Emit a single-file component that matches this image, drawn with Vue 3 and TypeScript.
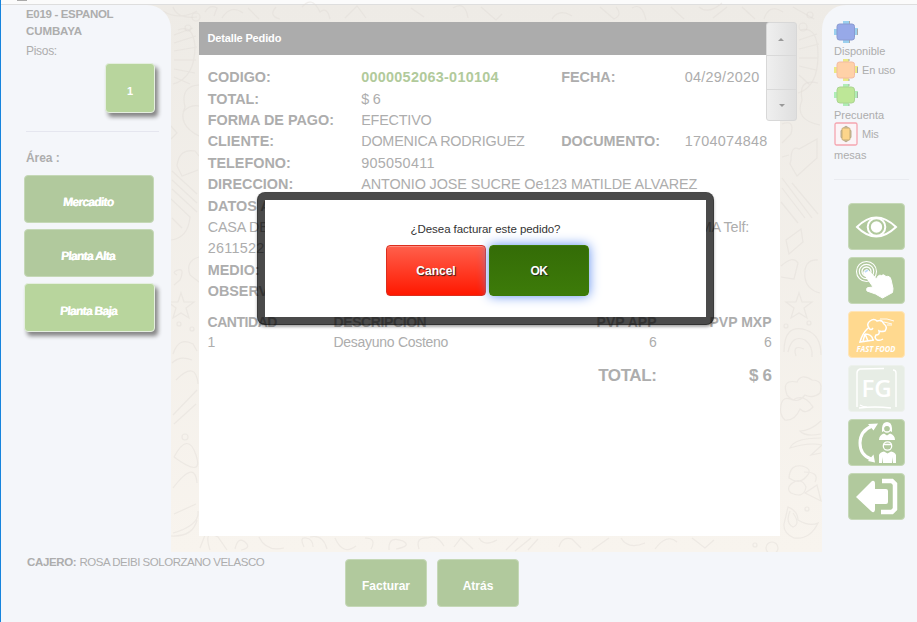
<script setup lang="ts">
interface Field {
  label: string
  value?: string
  label2?: string
  value2?: string
  kind?: string
}

const fields: Field[] = [
  { label: 'CODIGO:', value: '0000052063-010104', label2: 'FECHA:', value2: '04/29/2020', kind: 'code' },
  { label: 'TOTAL:', value: '$ 6' },
  { label: 'FORMA DE PAGO:', value: 'EFECTIVO' },
  { label: 'CLIENTE:', value: 'DOMENICA RODRIGUEZ', label2: 'DOCUMENTO:', value2: '1704074848', kind: 'client' },
  { label: 'TELEFONO:', value: '905050411', kind: 'phone' },
  { label: 'DIRECCION:', value: 'ANTONIO JOSE SUCRE Oe123 MATILDE ALVAREZ', kind: 'address' },
]

const areas = [
  { name: 'Mercadito', active: false },
  { name: 'Planta Alta', active: false },
  { name: 'Planta Baja', active: true },
]
</script>

<template>
  <div class="screen">
    <div class="topbar"><span class="tab-mark"></span></div>
    <div class="main">
      <svg class="doodles" viewBox="0 0 917 552" fill="none" stroke="#dedad5" stroke-width="1.2">
        <g stroke-opacity=".4">
          <path d="M173 7q4 12 24 10M163 11q16 10 34 0M178 30q15-6 17 16 0 32-22 38M174 35l19-7M174 43l22-7M174 51l23-4M174 60h22M174 69l21 4M174 77l16 7" />
          <circle cx="188" cy="28" r="3" /><circle cx="196" cy="17" r="4" />
          <path d="M199 85q-19 1-14 22-8 18 14 29M183 112q7-8 16-6M171 126l6 7-6 6M177 166q2-18 18-15l4 5M177 166l5 10 16-6" />
          <path d="M172 171l25 23M172 180l25 23M172 189l25 23M171 199l19 18q-2 21-19 23M172 218l10 10M177 275q-6-3 1-5t2 10l-6 5M199 257q-14 4-9 18l9 7" />
          <path d="m181 293 3 9h10l-8 6 3 10-8-5-8 5 3-10-8-6h10zM173 354q6-18 20-10l4 7M172 363q8-8 20-3M176 380q20-20 22 4M173 415l24-25M174 424l22-20M174 457q14-26 22-2t-22 2M173 488q22-29 24-5M174 514l22-10M173 533q27-8 25-22" />
          <circle cx="179" cy="324" r="2" /><circle cx="192" cy="329" r="2" /><circle cx="185" cy="437" r="3" />
          <path d="M205 12q5-8 12-4l-3 8M222 18q9-14 21-5M248 8l11 11M276 7q-8 9 4 12M302 7q10-12 18 5 7-6 10 7M345 18l12-12 9 12M411 8l13 9M453 8q12-8 15 10M481 7l15 13 6-6M552 19q7-11 20-3M600 7l14 12q9-4 2-12M632 8q10-6 14 12M671 7l13 12M699 7q9 8 23-4M713 18l14-11" />
          <path d="M742 7l13 12M764 19q5-16 19-7M793 7l21 12M800 30q18-5 18 25 0 32-20 38M799 40l18-6M799 49l20-5M799 58h19M799 66l17 4M799 75l11 10" />
          <circle cx="803" cy="27" r="4" /><circle cx="810" cy="15" r="3" />
          <path d="M818 83q-20-5-16 17-8 20 18 25M782 124q13-5 9 10l-9 9M782 157l7-2M791 160q0-15 8-11l18-10v19l-20 18-7-12z" />
          <path d="M782 178l30 40M782 188l23 30M781 202l17 21M792 183l26 31M786 240l15-11 2 13-14 12zM781 266q12-11 17-3l-4 16-13-2M818 260q-15-1-13 18 2 12 15 15" />
          <path d="m799 293 3 9h10l-8 6 3 10-8-5-8 5 3-10-8-6h10zM784 352q0-29 22-22 15 5 15 25M788 352q4-18 17-12 8 6 7 17M796 356q-4-12 8-7" />
          <circle cx="786" cy="326" r="2" /><circle cx="809" cy="323" r="2" />
          <path d="M787 395q-6-16 10-13 4-9 15-2 12 0 8 13-7 6-15 2-9 11-18 0zM781 405q2-10 12-5 11-7 20 7-7 8-13 2-5 12-15 11-6-5-4-15z" />
          <path d="M821 421q-11 10-21 10 5 6 21 3M821 438q-27 0-31 10 19-6 32-3l-11 10 10-2" />
          <path d="M789 478q1-14 13-12 12 3 4 11-7 8-17 1zM791 484q10-8 15 3-2 12-15 6-5-4 0-9zM804 472q16 0 11 10M805 493l12-8 4 16z" />
          <path d="M788 507q10 4 10 13 12 7 20 3-8 17-24 15-11-5-10-14zM790 511q-5 12 3 16 8-3 0-14" />
          <circle cx="807" cy="509" r="2" />
          <path d="M171 536q22 1 26-16M200 548l5-13M210 550q-7-22 8-13l9 13M235 549q3-13 10-7t-4 8M259 537q7 15 25 11M304 547q-5-10 2-9t7 9M310 537q13-3 17 12M335 538q8 18 21 8M365 538q12 0 6 11M389 550q-1-15 14-9 9 5-7 8M419 549q-4-12 9-11 9-4 16 8M454 547l7-9 12 11M479 538q5 9 18 2M506 550l12-12M515 551l16-13M528 550l10-11M559 547q3-11 13-8l9 9M592 550l17-12M621 538q7 12 24 5M655 549q12-16 22-7M692 538l13 10 9-8" />
          <circle cx="755" cy="545" r="2" /><circle cx="772" cy="548" r="6" />
        </g>
      </svg>

      <aside class="left">
        <div class="store"><span>E019 - ESPANOL</span><br>CUMBAYA</div>
        <div class="floor-label">Pisos:</div>
        <button class="floor">1</button>
        <div class="area-head">Área :</div>
        <div class="areas">
          <button v-for="a in areas" :key="a.name" class="area" :class="{ active: a.active }">
            <span>{{ a.name }}</span>
          </button>
        </div>
      </aside>

      <section class="detail">
        <header><span>Detalle Pedido</span></header>
        <div class="fields">
          <div v-for="f in fields" :key="f.label" class="field" :class="f.kind">
            <b>{{ f.label }}</b><span class="value">{{ f.value }}</span>
            <b class="label2">{{ f.label2 }}</b><span class="value2">{{ f.value2 }}</span>
          </div>
          <b class="line">DATOS ADICIONALES:</b>
          <div class="line split"><span>CASA DE DOS PISOS</span><span class="telf">MA Telf:</span></div>
          <div class="line phone2">2611522</div>
          <b class="line">MEDIO:</b>
          <b class="line">OBSERVACIONES:</b>
        </div>
        <div class="items">
          <b>CANTIDAD</b><b>DESCRIPCION</b><b class="num">PVP APP</b><b class="num">PVP MXP</b>
          <span>1</span><span class="desc">Desayuno Costeno</span><span class="num">6</span><span class="num">6</span>
        </div>
        <div class="total"><b>TOTAL:</b><b>$ 6</b></div>
        <div class="scroller">
          <div><i class="up"></i></div>
          <div></div>
          <div><i class="down"></i></div>
        </div>
      </section>

      <aside class="right">
        <div class="legend">
          <div class="row"><svg width="24" height="22" viewBox="0 0 24 22"><path d="M9 0h6v4H9zM9 18h6v4H9zM0 8h3v6H0zM21 7h3v7h-3z" fill="#9bd0ee" /><path d="M15.500 0v3M15.500 19v3M23.5 8v6" stroke="#aaa" /><rect x="3" y="3" width="17.500" height="16" rx="2.5" fill="#97a9e8" stroke="#8a9ad0" /></svg></div>
          <div class="caption disp">Disponible</div>
          <div class="row use"><svg width="24" height="22" viewBox="0 0 24 22"><path d="M9 0h6v4H9zM9 18h6v4H9zM0 8h3v6H0zM21 7h3v7h-3z" fill="#ece985" /><path d="M15 0v2M15 20v2M23.5 8v6" stroke="#aaa" /><rect x="3" y="3" width="17.500" height="16" rx="2.5" fill="#ffd1a7" stroke="#f3bba3" /></svg><span>En uso</span></div>
          <div class="row pre"><svg width="24" height="22" viewBox="0 0 24 22"><path d="M9 0h6v4H9zM9 18h6v4H9zM0 8h3v6H0zM21 7h3v7h-3z" fill="#b0edb7" /><path d="M15 0v2M15 20v2M23.5 8v6" stroke="#a5b5a5" /><rect x="3" y="3" width="17.500" height="16" rx="3" fill="#bde797" stroke="#abd491" /></svg></div>
          <div class="caption precuenta">Precuenta</div>
          <div class="row mine"><svg width="24" height="24" viewBox="0 0 24 24"><rect x="1" y="1" width="22" height="22" rx="1.5" fill="#fbf4f7" stroke="#f5a5b0" stroke-width="1.3" /><path d="M9.500 6Q12 2.500 14.500 6V18Q12 21.500 9.500 18ZM7 8.500h10v7H7z" fill="#c8bea5" stroke="#b9ad92" /><rect x="8" y="6" width="8" height="12" rx="1" fill="#fcd58b" stroke="#c5ad79" /></svg><span>Mis</span></div>
          <div class="caption mesas">mesas</div>
        </div>
        <nav class="tools">
          <button><svg viewBox="0 0 57 47" fill="none" stroke="#fff" stroke-width="2"><path d="M9 24Q28 5 48 24Q28 43 9 24Z" /><circle cx="28.5" cy="24" r="8.8" /><circle cx="28.5" cy="24" r="5.7" fill="#fff" stroke="none" /></svg></button>
          <button><svg viewBox="0 0 57 47" fill="none" stroke="#fff"><circle cx="18.5" cy="14.5" r="10" stroke-width="1.1" /><circle cx="18.5" cy="14.5" r="7.200" stroke-width="1.2" /><circle cx="18.5" cy="14.5" r="4.500" stroke-width="1.4" /><path d="M16 14.500q2.500-4 5.500 0l7 7.500q1.500-5 5-3.500 2-2 4.500 1 4-1 5 3l2 9-.5 4-10 5.500-7-4-8.500-3q-1.500-3.500 2-3.500l4-.5-9-13q-.8-1.500 0-2.500z" fill="#fff" /><path d="m17 15 3-2" stroke="#bddcf8" stroke-width="1.600" /></svg></button>
          <button class="food"><svg viewBox="0 0 57 47" fill="none" stroke="#fff" stroke-width="1.500"><path d="M21 17q-3-4 1-7 4-3 7 0 5-2 7 3 4 3 1 7-4 1-6 0 1 4-3 4-2 3 1 5 3 1 6-1M20 17q-6 6-8 14l14-2M17 23q7 0 8 6M15 30l2-7M20 30l-3-7M21 17q2 3 4 0" /><path d="M32 8q7-1 14 2M36 11l8 2M39 14h5" stroke-width=".9" /><text x="8.500" y="40.500" fill="#fff" stroke="none" textLength="39" lengthAdjust="spacingAndGlyphs">FAST FOOD</text></svg></button>
          <button class="fg"><svg viewBox="0 0 57 47" fill="none" stroke="#fff" stroke-width="1.4"><path d="M9 42V8q0-3 3-4l24-.5M45 5q3 0 3 3v34M11 43q16-2 32 0M12 40q3 2 7 2" /><text x="28.500" y="32" text-anchor="middle" fill="#fff" stroke="none">FG</text></svg></button>
          <button><svg viewBox="0 0 57 47" fill="none" stroke="#fff" stroke-width="3"><path d="M24 7Q12 12 12 24T23 40" /><path d="m20 5 10-.5-4.500 7zM20 42l5.500-6.500 1.500 8z" fill="#fff" stroke="none" /><circle cx="39" cy="9.500" r="3.500" stroke-width="1.300" /><path d="M34 13V9q.5-6 5-6t5 6v4l-2-1q1-5-3-5t-3 5zM31 21q0-5 5-6.500l3 2 3-2q5 1.500 5 6.500z" fill="#fff" stroke="none" /><circle cx="39.500" cy="27" r="4.200" stroke-width="1.300" /><path d="M35.500 25.500h8" stroke-width="1.300" /><path d="M31 44v-8q1-3 5-3.500l3.500 2 3.500-2q4 .5 5 3.500v8h-3v-6l-1 6h-9v-6l-1 6z" fill="#fff" stroke="none" /></svg></button>
          <button><svg viewBox="0 0 57 47"><path d="m8 24 16-16q3-1 3 3v5h11q2 0 2 2v11q0 2-2 2H27v6q-1 4-4 1z" fill="#fff" /><path d="M34 8h10l3 3v25l-3 3H33" fill="none" stroke="#fff" stroke-width="4.500" /></svg></button>
        </nav>
      </aside>
    </div>

    <footer>
      <div class="cashier"><b>CAJERO:</b> <span>ROSA DEIBI SOLORZANO VELASCO</span></div>
      <button class="invoice">Facturar</button>
      <button>Atrás</button>
    </footer>

    <div class="dialog">
      <p>¿Desea facturar este pedido?</p>
      <div class="actions">
        <button class="cancel">Cancel</button>
        <button class="ok">OK</button>
      </div>
    </div>
  </div>
</template>

<style>
body { margin: 0; overflow: hidden; }
</style>

<style scoped>
* { box-sizing: border-box; }
.screen {
  position: relative; width: 917px; height: 622px; overflow: hidden;
  display: flex; flex-direction: column; background: #f4f6fa;
  border-left: 1px solid #1684dd;
  font-family: "Liberation Sans", Arial, sans-serif; color: #adadad; white-space: nowrap;
}
button {
  font: bold 12px "Liberation Sans", Arial, sans-serif; color: #fff; padding: 0;
  border: 1px solid #c5d8b7; border-radius: 4px; background: #b1c99d;
}
.topbar { height: 5px; flex: none; background: #fbfbfb; border-bottom: 1px solid #dedede; }
.tab-mark { display: block; width: 10px; height: 1px; margin-left: 16px; background: #aaa; }
.main {
  position: relative; height: 547px; flex: none; display: grid; grid-template-columns: 170px 651px 95px;
  background: linear-gradient(#eeebe6, #f8f4ee);
}
.doodles { position: absolute; left: -1px; top: -5px; width: 917px; height: 552px; }
.left, .right { position: relative; background: #f4f6fa; }
.left { border-top-right-radius: 24px; padding: 1px 17px 0 23px; }
.store { padding-left: 2px; font-weight: bold; font-size: 11.500px; line-height: 16.500px; letter-spacing: -.1px; }
.store span { letter-spacing: -.33px; }
.floor-label { padding-left: 2px; font-size: 12px; line-height: 16px; margin-top: 4px; letter-spacing: -.3px; }
.floor {
  display: block; width: 50px; height: 50px; margin: 4px 0 0 81px; padding-top: 6px; font-size: 11px;
}
.floor, .area.active { background: #b8d59d; border: 1px solid #e5efe0; box-shadow: 3px 4px 4px #858585; }
.area-head {
  width: 133px; margin: 18px 0 0 2px; padding-top: 18px; border-top: 1px solid #e5e6ef;
  font-weight: bold; font-size: 12px; line-height: 16px; letter-spacing: -.05px;
}
.areas { display: flex; flex-direction: column; gap: 6px; margin-top: 9px; }
.area { width: 130px; height: 48px; padding-top: 6px; font-size: 12px; }
.area span { display: inline-block; letter-spacing: -.7px; transform: translateX(-1px) skewX(-5deg); text-shadow: .4px 0 #fff; }
.area.active { width: 131px; height: 49px; }

.detail { position: relative; margin: 17px 0 0 28px; width: 581px; height: 514px; background: #fff; }
.detail header {
  height: 33px; display: flex; align-items: center; padding: 0 0 2px 8.500px; background: #acacac;
  color: #fff; font-weight: bold; font-size: 11px; letter-spacing: -.15px;
}
.fields { padding: 12.200px 0 0 8.700px; font-size: 14.400px; line-height: 21.400px; letter-spacing: -.2px; }
.fields b { letter-spacing: 0; }
.field { display: grid; grid-template-columns: 153.500px 200px 123.500px 90px; height: 21.400px; }
.code .value { color: #b1ca9b; font-weight: bold; letter-spacing: .28px; }
.address .value { letter-spacing: -.11px; }
.value2, .phone .value, .phone2 { letter-spacing: .28px; }
.line { display: block; height: 21.400px; }
.split { display: flex; justify-content: space-between; padding-right: 31px; }
.items {
  display: grid; grid-template-columns: 126px 220px 103px 115px; padding: 10px 0 0 8.500px;
  font-size: 14px; line-height: 20px; letter-spacing: -.28px;
}
.items b { letter-spacing: -.45px; }
.items b + b { letter-spacing: -.4px; }
.items b.num { letter-spacing: 0; }
.num { text-align: right; }
.total {
  display: grid; grid-template-columns: 449px 115px; text-align: right; padding-left: 8.500px;
  margin-top: 13.500px; font-size: 17px; line-height: 20px; letter-spacing: -.4px;
}
.scroller {
  position: absolute; left: 566.500px; top: 0; width: 31px; height: 99px;
  display: grid; grid-template-rows: 32px 34px 31px; border: 1px solid #d8d8d8; border-radius: 3px;
  background: linear-gradient(90deg, #efefef, #dfdfdf);
}
.scroller div { display: grid; place-items: center; }
.scroller div + div { border-top: 1px solid #d9d9d9; }
.scroller i { border: 3.500px solid transparent; }
.up { border-bottom-color: #999 !important; border-top: 0 !important; }
.down { border-top-color: #999 !important; border-bottom: 0 !important; margin-left: 2px; }

.right { border-top-left-radius: 24px; padding: 16px 0 0 12px; }
.legend { width: 75px; height: 159px; border-bottom: 1px solid #e9ebf0; font-size: 11px; line-height: 14px; }
.row { display: flex; align-items: center; height: 22px; gap: 4px; letter-spacing: -.2px; }
.row svg { flex: none; }
.disp { margin: 1px 0 0; line-height: 15px; }
.pre { margin-top: 3px; }
.precuenta { margin-top: 2px; line-height: 14px; }
.mine { height: 24px; }
.mesas { margin-top: 2px; }
.tools { display: grid; grid-template-rows: repeat(6, 47px); gap: 7px; margin: 23px 0 0 14px; width: 57px; }
.tools button { display: block; overflow: hidden; }
.tools svg { display: block; width: 57px; height: 47px; margin: -1px; }
.tools .food { background: #ffd98f; border-color: #ffe5b8; }
.tools .fg { background: #e7ede5; border-color: #edf1ed; }
.food text { font: italic bold 8.500px "Open Sans", sans-serif; }
.fg text { font: 600 24px "Open Sans", sans-serif; }

footer { display: flex; padding: 7px 0 0 26px; }
.cashier { width: 318px; line-height: 6px; font-size: 11.500px; }
.cashier b { letter-spacing: -.35px; }
.cashier span { letter-spacing: -.48px; }
footer button { width: 82px; height: 48px; padding-top: 6px; margin-right: 10px; letter-spacing: 0; }

.dialog {
  position: absolute; left: 256px; top: 192px; width: 457px; height: 133px;
  border: 8px solid rgba(0, 0, 0, .71); border-radius: 8px; box-shadow: 0 2px 3px rgba(0, 0, 0, .35);
  background: #fff; background-clip: padding-box; display: flex; flex-direction: column; align-items: center;
}
.dialog p { margin: 22px 0 0; font-size: 11.500px; line-height: 15px; color: #333; letter-spacing: -.06px; }
.actions { display: flex; gap: 3px; margin: 8px 0 0 4px; }
.actions button { width: 100px; height: 51px; letter-spacing: 0; text-shadow: 1px 1px 1px #222; }
.actions .cancel { border-color: #dc2e1d; background: linear-gradient(#ff604c, #ff1800); box-shadow: inset 0 1px #ff8b7e; }
.actions .ok { border-color: #3b7909; background: linear-gradient(#346c07, #3d7b09); box-shadow: 0 0 12px #5d8df0; letter-spacing: -.6px; }
</style>
